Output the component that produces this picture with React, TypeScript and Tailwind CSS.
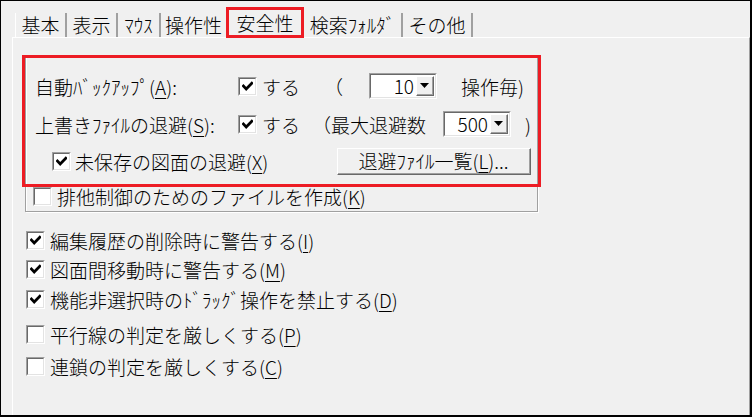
import type { ReactNode } from "react";

const font = "font-['Noto_Sans_CJK_JP','Noto_Sans_CJK_SC',sans-serif]";

// access key letter
function U({ children }: { children: ReactNode }) {
  return <span className="underline decoration-1 underline-offset-[3px]">{children}</span>;
}

function CheckBox({ checked }: { checked?: boolean }) {
  return (
    <span className="flex h-[19px] w-[19px] shrink-0 border border-t-[#a0a0a0] border-l-[#a0a0a0] border-r-white border-b-white">
      <span className="flex flex-1 items-center justify-center border border-t-[#696969] border-l-[#696969] border-r-[#e3e3e3] border-b-[#e3e3e3] bg-white">
        {checked && (
          <svg width="11" height="11" viewBox="0 0 11 11">
            <path d="M1.4 5 L4.2 8 L9.8 2.2" fill="none" stroke="#000" strokeWidth="2.7" strokeLinecap="square" />
          </svg>
        )}
      </span>
    </span>
  );
}

function Combo({ value }: { value: string }) {
  return (
    <div className="flex h-[26px] w-[68px] shrink-0 border border-t-[#a0a0a0] border-l-[#a0a0a0] border-r-white border-b-white">
      <div className="flex flex-1 border border-t-[#696969] border-l-[#696969] border-r-[#e3e3e3] border-b-[#e3e3e3] bg-white">
        <span className="flex-1 pr-[2px] text-right leading-[22px]">{value}</span>
        <div className="my-[1px] mr-[1px] flex w-[18px] border border-t-white border-l-white border-r-[#696969] border-b-[#696969] bg-[#f0f0f0]">
          <div className="flex flex-1 items-center justify-center border-r border-b border-[#a0a0a0]">
            <svg width="9" height="5" viewBox="0 0 9 5">
              <path d="M0 0 H9 L4.5 5 Z" fill="#000" />
            </svg>
          </div>
        </div>
      </div>
    </div>
  );
}

function PushButton({ children }: { children: ReactNode }) {
  return (
    <div className="flex h-[27px] w-[194px] border border-t-white border-l-white border-r-[#696969] border-b-[#696969] bg-[#f0f0f0]">
      <div className="flex flex-1 items-center justify-center border-r border-b border-[#a0a0a0] leading-none">
        {children}
      </div>
    </div>
  );
}

function OptionRow({ checked, children, className }: { checked?: boolean; children: ReactNode; className: string }) {
  return (
    <div className={`ml-[13px] flex h-[24px] items-center ${className}`}>
      <CheckBox checked={checked} />
      <span className="ml-[5px] leading-none">{children}</span>
    </div>
  );
}

const tabs = [
  { label: "基本", w: "w-[52px] border-l" },
  { label: "表示", w: "w-[51px]" },
  { label: "ﾏｳｽ", w: "w-[43px]" },
  { label: "操作性", w: "w-[65px]" },
];

export default function App() {
  return (
    <div className={`flex h-[417px] w-[752px] flex-col overflow-hidden border-t border-l border-r-2 border-b-2 border-black bg-[#f0f0f0] text-[19px] font-light text-black ${font}`}>
      {/* Tab strip */}
      <div className="flex h-[36px] shrink-0 items-end pl-[14px]">
        {tabs.map((t) => (
          <div
            key={t.label}
            className={`flex h-[24px] items-center justify-center pb-[2px] leading-none ${t.w} ${t.label === "操作性" ? "" : "border-r-2 border-r-[#a0a0a0]"} border-l-white`}
          >
            {t.label}
          </div>
        ))}
        <div className="relative z-10 -mb-[1px] flex h-[31px] w-[78px] items-center justify-center border-[3px] border-[#ed1c24] leading-none">
          安全性
        </div>
        <div className="flex h-[24px] w-[99px] items-center justify-center pb-[2px] leading-none border-r-2 border-r-[#a0a0a0]">
          検索ﾌｫﾙﾀﾞ
        </div>
        <div className="flex h-[24px] w-[70px] items-center justify-center pb-[2px] leading-none border-r-2 border-r-[#a0a0a0]">
          その他
        </div>
      </div>

      {/* Page */}
      <div className="ml-[11px] flex flex-1 flex-col border-t border-l border-white border-r border-r-[#a0a0a0]">
        {/* Backup group */}
        <div className="ml-[12px] mt-[17px] flex w-[513px] flex-col border-r border-l border-b border-[#a0a0a0] shadow-[inset_1px_0_0_#fff,1px_1px_0_#fff]">
          <div className="relative z-10 -mx-[4px] flex flex-col border-[3px] border-[#ed1c24] pb-[8px]">
            <div className="mt-[13px] flex h-[30px] items-center pl-[10px] leading-none">
              <span className="w-[203px]">
                自動ﾊﾞｯｸｱｯﾌﾟ(<U>A</U>):
              </span>
              <CheckBox checked />
              <span className="ml-[5px] w-[62px]">する</span>
              <span className="w-[45px]">（</span>
              <Combo value="10" />
              <span className="ml-[24px]">操作毎)</span>
            </div>
            <div className="mt-[8px] flex h-[30px] items-center pl-[10px] leading-none">
              <span className="w-[203px]">
                上書きﾌｧｲﾙの退避(<U>S</U>):
              </span>
              <CheckBox checked />
              <span className="ml-[5px] w-[50px]">する</span>
              <span className="w-[131px]">（最大退避数</span>
              <Combo value="500" />
              <span className="ml-[14px]">)</span>
            </div>
            <div className="mt-[7px] flex h-[30px] items-center pl-[27px] leading-none">
              <CheckBox checked />
              <span className="ml-[4px] w-[262px]">
                未保存の図面の退避(<U>X</U>)
              </span>
              <PushButton>
                退避ﾌｧｲﾙ一覧(<U>L</U>)...
              </PushButton>
            </div>
          </div>
          <div className="-mt-[2px] mb-[4px] ml-[7px] flex h-[22px] items-center">
            <CheckBox />
            <span className="ml-[5px] leading-none">
              排他制御のためのファイルを作成(<U>K</U>)
            </span>
          </div>
        </div>

        <OptionRow checked className="mt-[16px]">
          編集履歴の削除時に警告する(<U>I</U>)
        </OptionRow>
        <OptionRow checked className="mt-[5px]">
          図面間移動時に警告する(<U>M</U>)
        </OptionRow>
        <OptionRow checked className="mt-[6px]">
          機能非選択時のﾄﾞﾗｯｸﾞ操作を禁止する(<U>D</U>)
        </OptionRow>
        <OptionRow className="mt-[11px]">
          平行線の判定を厳しくする(<U>P</U>)
        </OptionRow>
        <OptionRow className="mt-[8px]">
          連鎖の判定を厳しくする(<U>C</U>)
        </OptionRow>
      </div>
    </div>
  );
}
